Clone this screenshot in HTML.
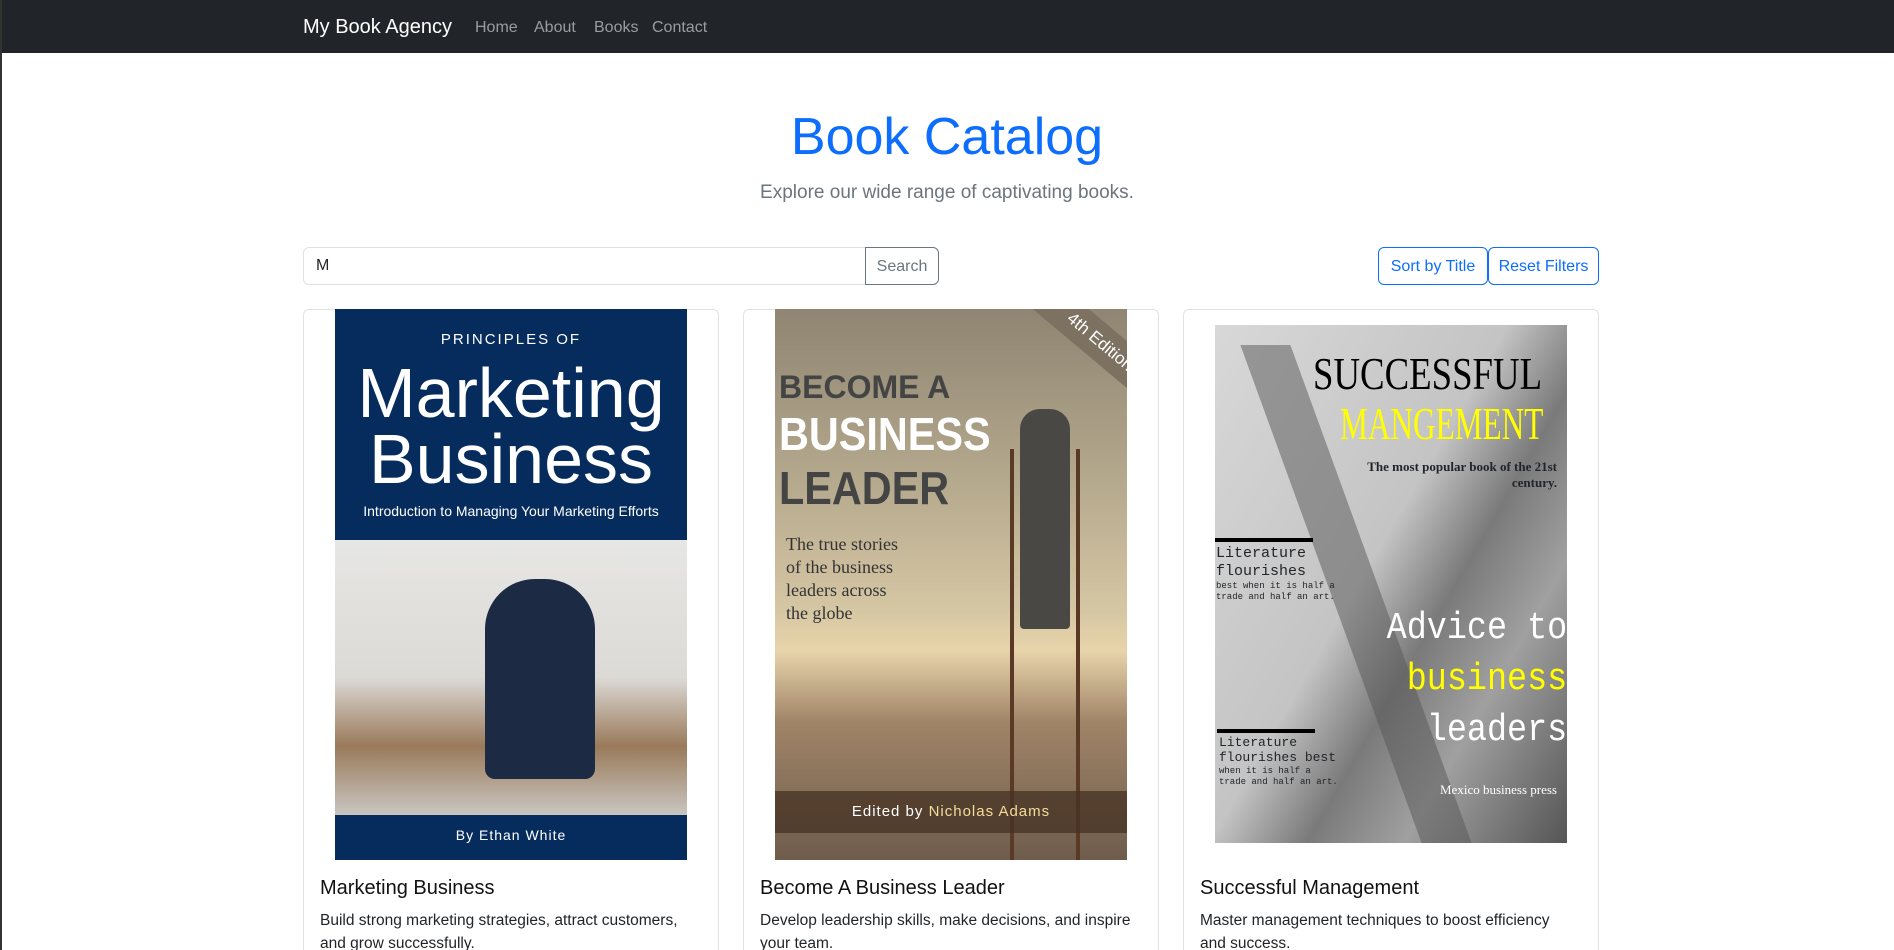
<!DOCTYPE html>
<html><head><meta charset="utf-8"><style>
*{box-sizing:border-box;margin:0;padding:0}
html,body{overflow:hidden}
body{width:1894px;height:950px;background:#fff;font-family:"Liberation Sans",sans-serif;color:#212529;position:relative}
.lb{position:absolute;left:0;top:0;width:2px;height:950px;background:#333;z-index:5}
.nav{position:absolute;left:0;top:0;width:1894px;height:53px;background:#212529}
.brand{position:absolute;left:303px;top:16px;color:#fff;font-size:20px}
.nl{position:absolute;top:19px;color:#9a9da0;font-size:16px}
h1{position:absolute;left:0;width:1894px;text-align:center;top:107px;font-size:52px;font-weight:300;color:#0d6efd}
.lead{position:absolute;left:0;width:1894px;text-align:center;top:182px;font-size:19px;font-weight:300;color:#6c757d}
.inp{position:absolute;left:303px;top:247px;width:563px;height:38px;border:1px solid #dee2e6;border-radius:6px 0 0 6px;font-size:16px;padding:9px 12px}
.btn{position:absolute;top:247px;height:38px;border:1px solid;font-size:16px;text-align:center;line-height:37px;border-radius:6px}
.card{position:absolute;top:309px;width:416px;height:680px;border:1px solid #dee2e6;border-radius:6px}
.cov{position:absolute;overflow:hidden}
.ct{position:absolute;left:16px;top:567px;font-size:20px;font-weight:500;color:#111}
.cx{position:absolute;left:16px;top:599px;font-size:15.5px;line-height:23px;width:375px}
.a{position:absolute;white-space:nowrap}
</style></head><body>
<div class="lb"></div>
<div class="nav"><span class="brand">My Book Agency</span>
<span class="nl" style="left:475px">Home</span><span class="nl" style="left:534px">About</span><span class="nl" style="left:594px">Books</span><span class="nl" style="left:652px">Contact</span></div>
<h1>Book Catalog</h1>
<div class="lead">Explore our wide range of captivating books.</div>
<div class="inp">M</div>
<div class="btn" style="left:865px;width:74px;border-color:#6c757d;color:#6c757d;border-radius:0 6px 6px 0">Search</div>
<div class="btn" style="left:1378px;width:110px;border-color:#0d6efd;color:#0d6efd">Sort by Title</div>
<div class="btn" style="left:1488px;width:111px;border-color:#0d6efd;color:#0d6efd">Reset Filters</div>

<div class="card" style="left:303px">
<div class="cov" style="left:31px;top:-1px;width:352px;height:551px;background:#062c5e">
<div class="a" style="left:0;width:352px;text-align:center;top:22px;color:#fff;font-size:15px;letter-spacing:2px">PRINCIPLES OF</div>
<div class="a" style="left:0;width:352px;text-align:center;top:44px;color:#fff;font-size:70px">Marketing</div>
<div class="a" style="left:0;width:352px;text-align:center;top:110px;color:#fff;font-size:70px">Business</div>
<div class="a" style="left:0;width:352px;text-align:center;top:194px;color:#fff;font-size:14px">Introduction to Managing Your Marketing Efforts</div>
<div class="a" style="left:0;top:231px;width:352px;height:275px;background:linear-gradient(180deg,#e6e6e4 0%,#dcdad6 50%,#9a7a5a 75%,#c9c6c0 100%)"></div>
<div class="a" style="left:150px;top:270px;width:110px;height:200px;background:#1c2a44;border-radius:50px 50px 10px 10px"></div>
<div class="a" style="left:0;width:352px;text-align:center;top:518px;color:#fff;font-size:14px;letter-spacing:1px">By Ethan White</div>
</div>
<div class="ct">Marketing Business</div>
<div class="cx">Build strong marketing strategies, attract customers, and grow successfully.</div>
</div>

<div class="card" style="left:743px">
<div class="cov" style="left:31px;top:-1px;width:352px;height:551px;background:linear-gradient(180deg,#8f8572 0%,#b3a78c 30%,#d6c7a4 55%,#e8d4ab 62%,#a08468 75%,#6e5c4c 100%)">
<div class="a" style="left:245px;top:15px;width:160px;height:36px;background:#7d7161;transform:rotate(40deg);color:#fff;font-size:17px;text-align:center;line-height:36px">4th Edition</div>
<div class="a" style="left:4px;top:60px;font-size:32px;font-weight:bold;color:#444">BECOME A</div>
<div class="a" style="left:4px;top:98px;font-size:46px;font-weight:bold;color:#fff;transform:scaleX(.9);transform-origin:left">BUSINESS</div>
<div class="a" style="left:4px;top:152px;font-size:46px;font-weight:bold;color:#444;transform:scaleX(.9);transform-origin:left">LEADER</div>
<div class="a" style="left:11px;top:224px;font-size:18px;line-height:23px;color:#333;font-family:'Liberation Serif',serif">The true stories<br>of the business<br>leaders across<br>the globe</div>
<div class="a" style="left:245px;top:100px;width:50px;height:220px;background:#4a4844;border-radius:20px 20px 4px 4px"></div>
<div class="a" style="left:235px;top:140px;width:70px;height:420px;border-left:4px solid #5a3a25;border-right:4px solid #5a3a25"></div>
<div class="a" style="left:0;top:482px;width:352px;height:42px;background:rgba(70,50,35,.75);color:#fff;font-size:15px;text-align:center;line-height:42px;letter-spacing:1px">Edited by <span style="color:#f4dc9a">Nicholas Adams</span></div>
</div>
<div class="ct">Become A Business Leader</div>
<div class="cx">Develop leadership skills, make decisions, and inspire your team.</div>
</div>

<div class="card" style="left:1183px">
<div class="cov" style="left:31px;top:15px;width:352px;height:518px;background:linear-gradient(120deg,#d8d8d8 0%,#c4c4c4 45%,#7a7a7a 60%,#a0a0a0 75%,#555 100%);font-family:'Liberation Serif',serif">
<div class="a" style="left:120px;top:20px;width:50px;height:520px;background:#555;transform:skewX(20deg);opacity:.5"></div>
<div class="a" style="left:98px;top:22px;font-size:46px;color:#000;transform:scaleX(.8);transform-origin:left">SUCCESSFUL</div>
<div class="a" style="left:125px;top:72px;font-size:46px;color:#ff0;transform:scaleX(.68);transform-origin:left">MANGEMENT</div>
<div class="a" style="right:10px;top:134px;font-size:13px;font-weight:bold;text-align:right;line-height:16px">The most popular book of the 21st<br>century.</div>
<div class="a" style="left:0;top:213px;width:98px;height:4px;background:#000"></div>
<div class="a" style="left:1px;top:220px;font-size:15px;line-height:18px;font-family:'Liberation Mono',monospace">Literature<br>flourishes</div>
<div class="a" style="left:1px;top:256px;font-size:9px;line-height:11px;font-family:'Liberation Mono',monospace">best when it is half a<br>trade and half an art.</div>
<div class="a" style="right:0;top:278px;font-size:38px;line-height:51px;color:#fff;text-align:right;font-family:'Liberation Mono',monospace;transform:scaleX(.88);transform-origin:right">Advice to<br><span style="color:#ff0">business</span><br>leaders</div>
<div class="a" style="left:2px;top:404px;width:98px;height:4px;background:#000"></div>
<div class="a" style="left:4px;top:410px;font-size:13px;line-height:15px;font-family:'Liberation Mono',monospace">Literature<br>flourishes best</div>
<div class="a" style="left:4px;top:441px;font-size:9px;line-height:11px;font-family:'Liberation Mono',monospace">when it is half a<br>trade and half an art.</div>
<div class="a" style="right:10px;top:457px;font-size:13px;color:#fff">Mexico business press</div>
</div>
<div class="ct">Successful Management</div>
<div class="cx">Master management techniques to boost efficiency and success.</div>
</div>
</body></html>
